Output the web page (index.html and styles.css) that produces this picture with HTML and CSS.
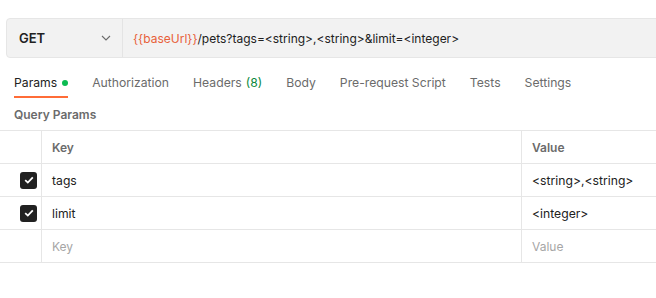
FILE: index.html
```html
<!DOCTYPE html>
<html>
<head>
<meta charset="utf-8">
<link rel="stylesheet" href="styles.css">
</head>
<body>
<div class="urlbar">
  <div class="method">
    <span class="method-name">GET</span>
    <svg class="chev" width="10" height="6" viewBox="0 0 10 6"><path d="M1 1 L5 5 L9 1" fill="none" stroke="#6b6b6b" stroke-width="1.1"/></svg>
  </div>
  <div class="url"><span class="var">{{baseUrl}}</span>/pets?tags=&lt;string&gt;,&lt;string&gt;&amp;limit=&lt;integer&gt;</div>
</div>
<div class="tabs">
  <div class="tab active">Params<span class="dot"></span></div>
  <div class="tab">Authorization</div>
  <div class="tab">Headers <span class="count">(8)</span></div>
  <div class="tab">Body</div>
  <div class="tab">Pre-request Script</div>
  <div class="tab">Tests</div>
  <div class="tab">Settings</div>
</div>
<div class="section-title">Query Params</div>
<div class="table">
  <div class="row head">
    <div class="c-check"></div>
    <div class="c-key">Key</div>
    <div class="c-val">Value</div>
  </div>
  <div class="row">
    <div class="c-check"><span class="cb"><svg width="10" height="8" viewBox="0 0 10 8"><path d="M1.2 4.2 L3.8 6.6 L8.8 1.4" fill="none" stroke="#fff" stroke-width="1.8"/></svg></span></div>
    <div class="c-key">tags</div>
    <div class="c-val">&lt;string&gt;,&lt;string&gt;</div>
  </div>
  <div class="row">
    <div class="c-check"><span class="cb"><svg width="10" height="8" viewBox="0 0 10 8"><path d="M1.2 4.2 L3.8 6.6 L8.8 1.4" fill="none" stroke="#fff" stroke-width="1.8"/></svg></span></div>
    <div class="c-key">limit</div>
    <div class="c-val">&lt;integer&gt;</div>
  </div>
  <div class="row placeholder">
    <div class="c-check"></div>
    <div class="c-key">Key</div>
    <div class="c-val">Value</div>
  </div>
</div>
</body>
</html>
```

FILE: styles.css
```css
html, body {
  margin: 0;
  padding: 0;
  background: #fff;
  overflow: hidden;
}
body {
  font-family: Inter, "Noto Sans", sans-serif;
  font-size: 12px;
  color: #212121;
  width: 656px;
  height: 298px;
}
.urlbar {
  margin: 18px 0 0 6px;
  width: 680px;
  height: 38px;
  border: 1px solid #e6e6e6;
  border-radius: 4px;
  background: #f2f2f2;
  display: flex;
  align-items: stretch;
}
.method {
  width: 116px;
  padding: 0 11px 0 12px;
  border-right: 1px solid #e4e4e4;
  display: flex;
  align-items: center;
  justify-content: space-between;
  box-sizing: border-box;
  flex: none;
}
.method-name {
  font-weight: 600;
  font-size: 13px;
  color: #212121;
}
.url {
  display: flex;
  align-items: center;
  padding-left: 10px;
  font-size: 12px;
  color: #212121;
  white-space: nowrap;
}
.var { color: #e8613a; }
.tabs {
  display: flex;
  margin: 11px 0 0 14px;
  gap: 24px;
  height: 29px;
}
.tab {
  color: #6b6b6b;
  font-size: 12.2px;
  line-height: 28px;
  display: flex;
  align-items: flex-start;
  box-sizing: border-box;
  border-bottom: 2px solid transparent;
  height: 29px;
}
.tab.active {
  color: #212121;
  border-bottom-color: #ff6c37;
}
.dot {
  width: 6px;
  height: 6px;
  border-radius: 50%;
  background: #0cbb52;
  margin: 11px 0 0 5px;
}
.count { color: #0b8a3e; margin-left: 4px; }
.section-title {
  margin: 9px 0 0 14px;
  font-size: 12px;
  font-weight: 600;
  color: #6b6b6b;
  line-height: 16px;
  height: 16px;
}
.table {
  margin-top: 7px;
  border-top: 1px solid #e6e6e6;
}
.row {
  display: flex;
  height: 32px;
  border-bottom: 1px solid #e6e6e6;
}
.c-check {
  width: 42px;
  border-right: 1px solid #e6e6e6;
  display: flex;
  align-items: center;
  justify-content: flex-end;
  padding-right: 4px;
  box-sizing: border-box;
  flex: none;
}
.c-key {
  width: 480px;
  border-right: 1px solid #e6e6e6;
  display: flex;
  align-items: center;
  padding-left: 10px;
  box-sizing: border-box;
  flex: none;
}
.c-val {
  display: flex;
  align-items: center;
  padding-left: 10px;
  flex: 1;
}
.row .c-key, .row .c-val { font-size: 12.2px; }
.head .c-key, .head .c-val {
  font-size: 12px;
  font-weight: 600;
  color: #6b6b6b;
}
.placeholder .c-key, .placeholder .c-val {
  color: #a6a6a6;
  font-size: 12px;
}
.cb {
  width: 17px;
  height: 17px;
  border-radius: 3px;
  background: #212121;
  display: flex;
  align-items: center;
  justify-content: center;
}
```
